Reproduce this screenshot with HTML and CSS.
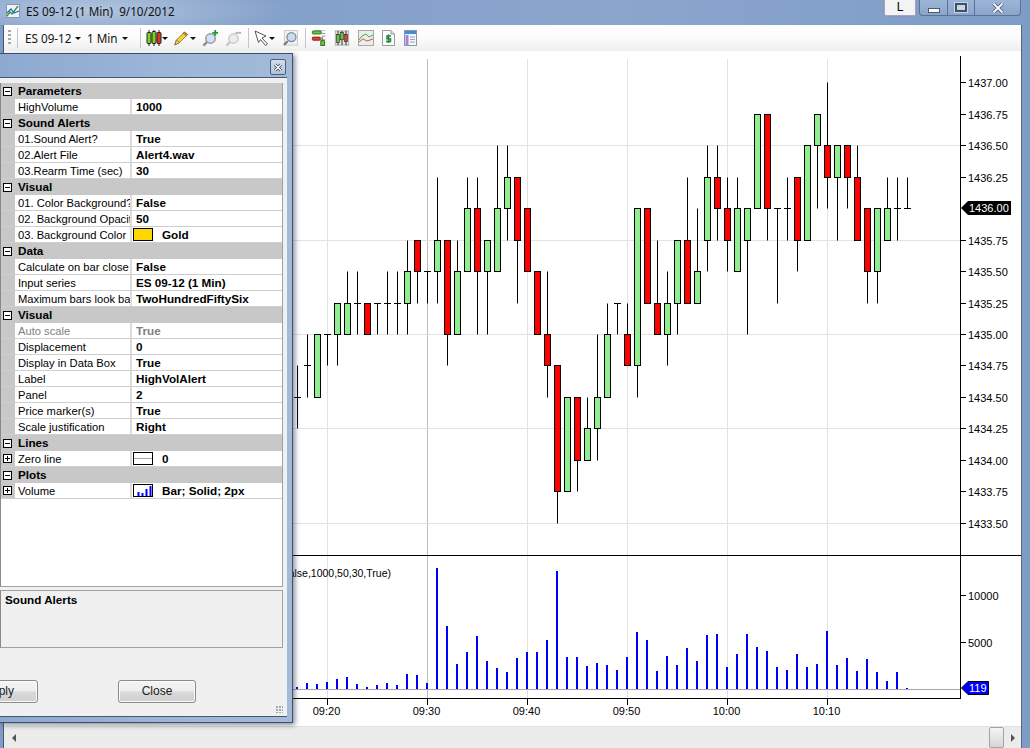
FILE: index.html
```html
<!DOCTYPE html>
<html lang="en">
<head>
  <meta charset="UTF-8" />
  <title>ES 09-12 (1 Min) 9/10/2012</title>
  <link rel="stylesheet" href="styles.css">
</head>

<body>
  <div class="titlebar">
    <svg class="title-icon" width="14" height="14" viewBox="0 0 14 14">
      <rect x="0.5" y="0.5" width="13" height="13" fill="#eef3fa" stroke="#8a97a8" />
      <path d="M1 12 L4 8 L6 10 L12 2" fill="none" stroke="#2f9a3c" stroke-width="1.4" />
      <path d="M1 9 L5 5 L8 9 L13 7" fill="none" stroke="#2a5fc0" stroke-width="1.2" />
    </svg>
    <span class="title-text">ES 09-12 (1 Min)&nbsp; 9/10/2012</span>
    <div class="link-btn">L</div>
    <div class="win-controls">
      <div class="win-btn min"><span></span></div>
      <div class="win-btn max"><span></span></div>
      <div class="win-btn close">
        <svg width="12" height="10" viewBox="0 0 12 10"><path d="M1.5 0.5 L10.5 9.5 M10.5 0.5 L1.5 9.5" stroke="#4a5a70" stroke-width="3.4" /><path d="M1.5 0.5 L10.5 9.5 M10.5 0.5 L1.5 9.5" stroke="#fff" stroke-width="1.8" /></svg>
      </div>
    </div>
  </div>

  <div class="content">
    <div class="toolbar">
      <div class="gripper"></div>
      <div class="sep first"></div>
      <span class="tb-text es">ES 09-12</span><span class="arrow"></span>
      <span class="tb-text mins">1 Min</span><span class="arrow"></span>
      <div class="sep"></div>

      <svg class="tb-icon" width="16" height="16" viewBox="0 0 16 16">
        <path d="M3 0 V16 M8 0 V16 M13 0 V16" stroke="#222" />
        <rect x="1" y="2.5" width="4" height="11" rx="1" fill="#7ed321" stroke="#222" />
        <rect x="6" y="1.5" width="4" height="12" rx="1" fill="#7ed321" stroke="#222" />
        <rect x="11" y="2.5" width="4" height="11" rx="1" fill="#e8302a" stroke="#222" />
      </svg><span class="arrow tight"></span>

      <svg class="tb-icon pencil" width="16" height="15" viewBox="0 0 20 18">
        <path d="M1 17 L3 11 L13 1 L17 4 L7 14 Z" fill="#f5d33a" stroke="#7a6a20" />
        <path d="M1 17 L3 11 L7 14 Z" fill="#f3d9a8" stroke="#7a6a20" />
        <path d="M13 1 L17 4 L15.5 5.5 L11.5 2.5 Z" fill="#e58a7a" stroke="#7a6a20" />
      </svg><span class="arrow tight"></span>

      <svg class="tb-icon zoom-in" width="17" height="17" viewBox="0 0 18 18">
        <path d="M1.5 16.5 L6 12" stroke="#8a8a8a" stroke-width="2.4" />
        <circle cx="9" cy="9" r="5" fill="#cfe2fb" stroke="#9a9a9a" stroke-width="1.6" />
        <path d="M11 3 H17 M14 0 V6" stroke="#1f9a2e" stroke-width="2" />
      </svg>
      <svg class="tb-icon zoom-out" width="17" height="17" viewBox="0 0 18 18">
        <path d="M1.5 16.5 L6 12" stroke="#c4c4c4" stroke-width="2.4" />
        <circle cx="9" cy="9" r="5" fill="#ececec" stroke="#cdcdcd" stroke-width="1.6" />
        <path d="M11 3 H17" stroke="#b8b8b8" stroke-width="2" />
      </svg>
      <div class="sep after-zoom"></div>

      <svg class="tb-icon cursor" width="15" height="16" viewBox="0 0 15 16">
        <path d="M1 1 L12 6 L8 8 L13.5 14 L11.5 15.5 L6.5 9.5 L4.5 12.5 Z" fill="#fff" stroke="#555" />
      </svg><span class="arrow tight"></span>

      <svg class="tb-icon find" width="15" height="16" viewBox="0 0 16 17">
        <rect x="1.5" y="0.5" width="14" height="15.5" fill="#f2f2f2" stroke="#c8c8c8" />
        <path d="M1 16 L5 12" stroke="#777" stroke-width="2.2" />
        <circle cx="9" cy="7.5" r="4.8" fill="#c5dcf8" stroke="#8a8a8a" stroke-width="1.4" />
      </svg>
      <div class="sep wide"></div>

      <svg class="tb-icon panel" width="16" height="16" viewBox="0 0 16 18">
        <path d="M4 0 H15 M11 4 H15 M11 7 H15 M12 11 H15 M12 14 H15 M12 17 H15" stroke="#888" />
        <path d="M11.5 8 V18" stroke="#222" />
        <rect x="0.5" y="1" width="10" height="3.5" rx="1" fill="#63c832" stroke="#2b6b1a" />
        <rect x="0.5" y="8" width="9" height="3.5" rx="1" fill="#e23c33" stroke="#7d1f1a" />
        <rect x="10" y="12" width="4" height="5.5" fill="#63c832" stroke="#2b6b1a" />
      </svg>
      <svg class="tb-icon candles" width="16" height="16" viewBox="0 0 16 18">
        <rect x="0.5" y="1" width="15" height="16" fill="#e4e4e4" stroke="#a8a8a8" />
        <path d="M3.5 1 V17 M8 1 V17 M12.5 1 V17" stroke="#222" />
        <rect x="2" y="5" width="3" height="9" fill="#63c832" stroke="#222" stroke-width="0.7" />
        <rect x="6.5" y="3" width="3" height="8" fill="#63c832" stroke="#222" stroke-width="0.7" />
        <rect x="11" y="5" width="3" height="8" fill="#e23c33" stroke="#222" stroke-width="0.7" />
      </svg>
      <svg class="tb-icon lines" width="16" height="16" viewBox="0 0 16 16">
        <rect x="0.5" y="0.5" width="15" height="15" fill="#ececec" stroke="#a8a8a8" />
        <path d="M1 10 L4 6 L8 4 L11 7 L15 5" fill="none" stroke="#3fb54a" />
        <path d="M1 12 L5 9 L9 11 L15 9" fill="none" stroke="#d8564e" />
      </svg>
      <svg class="tb-icon dollar" width="13" height="16" viewBox="0 0 13 16">
        <path d="M0.5 0.5 H9 L12.5 4 V15.5 H0.5 Z" fill="#fdfdfd" stroke="#9a9a9a" />
        <path d="M9 0.5 V4 H12.5" fill="#dcdcdc" stroke="#9a9a9a" />
        <path d="M9 6 H5 V8.7 H8.5 V11.5 H4 M6.5 4.5 V13" fill="none" stroke="#1e8a3a" stroke-width="1.5" />
      </svg>
      <svg class="tb-icon sheet" width="13" height="16" viewBox="0 0 13 16">
        <rect x="0.5" y="0.5" width="12" height="15" fill="#f4f6fa" stroke="#8c98a8" />
        <rect x="1" y="1" width="11" height="3" fill="#3f8fd8" />
        <rect x="1.5" y="5" width="3" height="10" fill="#a77fe0" />
        <path d="M6 7 H11 M6 9.5 H11 M6 12 H11" stroke="#9aa6b5" />
      </svg>
    </div>

    <svg id="chart" class="chart" width="1017" height="675" viewBox="4 51 1017 675"></svg>

    <div class="hscroll">
      <span class="scroll-left"></span>
      <div class="thumb"></div>
      <span class="scroll-right"></span>
    </div>
  </div>

  <div class="dialog">
    <div class="dialog-title">
      <div class="dialog-close">
        <svg width="10" height="9" viewBox="0 0 10 9"><path d="M2 1.5 L8 7.5 M8 1.5 L2 7.5" stroke="#3b4658" stroke-width="3" /><path d="M2 1.5 L8 7.5 M8 1.5 L2 7.5" stroke="#fff" stroke-width="1.4" /></svg>
      </div>
    </div>
    <div class="dialog-client">
      <div class="grid">
        <div class="cat"><span class="box"></span>Parameters</div>
        <div class="row"><div class="name">HighVolume</div><div class="val">1000</div></div>
        <div class="cat"><span class="box"></span>Sound Alerts</div>
        <div class="row"><div class="name">01.Sound Alert?</div><div class="val">True</div></div>
        <div class="row"><div class="name">02.Alert File</div><div class="val">Alert4.wav</div></div>
        <div class="row"><div class="name">03.Rearm Time (sec)</div><div class="val">30</div></div>
        <div class="cat"><span class="box"></span>Visual</div>
        <div class="row"><div class="name">01. Color Background?</div><div class="val">False</div></div>
        <div class="row"><div class="name">02. Background Opacity</div><div class="val">50</div></div>
        <div class="row"><div class="name">03. Background Color</div><div class="val swatched"><span class="swatch gold"></span>Gold</div></div>
        <div class="cat"><span class="box"></span>Data</div>
        <div class="row"><div class="name">Calculate on bar close</div><div class="val">False</div></div>
        <div class="row"><div class="name">Input series</div><div class="val">ES 09-12 (1 Min)</div></div>
        <div class="row"><div class="name">Maximum bars look back</div><div class="val">TwoHundredFiftySix</div></div>
        <div class="cat"><span class="box"></span>Visual</div>
        <div class="row disabled"><div class="name">Auto scale</div><div class="val">True</div></div>
        <div class="row"><div class="name">Displacement</div><div class="val">0</div></div>
        <div class="row"><div class="name">Display in Data Box</div><div class="val">True</div></div>
        <div class="row"><div class="name">Label</div><div class="val">HighVolAlert</div></div>
        <div class="row"><div class="name">Panel</div><div class="val">2</div></div>
        <div class="row"><div class="name">Price marker(s)</div><div class="val">True</div></div>
        <div class="row"><div class="name">Scale justification</div><div class="val">Right</div></div>
        <div class="cat"><span class="box"></span>Lines</div>
        <div class="row"><div class="name expandable"><span class="box plus"></span>Zero line</div><div class="val swatched"><span class="swatch zero"></span>0</div></div>
        <div class="cat"><span class="box"></span>Plots</div>
        <div class="row"><div class="name expandable"><span class="box plus"></span>Volume</div><div class="val swatched">
          <span class="swatch plot">
            <svg width="18" height="10" viewBox="0 0 18 10"><path d="M4.5 6 V10 M8.5 7 V10 M12.5 3 V10 M16.5 0 V10" stroke="#0000ff" stroke-width="2" /></svg>
          </span>Bar; Solid; 2px</div></div>
      </div>
      <div class="help">Sound Alerts</div>
      <div class="buttons">
        <button class="btn apply">Apply</button>
        <button class="btn">Close</button>
      </div>
      <div class="grip"></div>
    </div>
  </div>

  <script src="chart.js"></script>
</body>
</html>
```

FILE: styles.css
```css
* {
  box-sizing: border-box;
}

html, body {
  height: 100%;
}

body {
  margin: 0;
  position: relative;
  overflow: hidden;
  font-family: "Liberation Sans", Arial, sans-serif;
  font-size: 12px;
  color: #000;
  background: linear-gradient(90deg, #7f9cc6 0, #8aa6cd 60%, #7f9cc6 100%);
}

/* Window title */
.titlebar {
  height: 25px;
  display: flex;
  align-items: flex-start;
  padding-left: 6px;
  background: radial-gradient(ellipse 200px 30px at 90px 10px, #b3c6e0 0, rgba(179, 198, 224, 0) 100%);
}

.title-icon {
  margin-top: 4px;
}

.title-text {
  margin-left: 6px;
  margin-top: 3px;
  font-family: "Noto Sans", sans-serif;
  font-size: 11.7px;
  line-height: 17px;
  color: #111;
}

.link-btn {
  margin-left: auto;
  width: 32px;
  height: 16px;
  text-align: center;
  line-height: 14px;
  background: #f3f3f3;
  border: 1px solid #9aa8c0;
  border-top: none;
  border-radius: 0 0 2px 2px;
  box-shadow: 0 0 1px #b040c8;
}

.win-controls {
  display: flex;
  height: 16px;
  width: 102px;
  margin-left: 3px;
  margin-right: 9px;
  border: 1px solid #5c7194;
  border-top: none;
  border-radius: 0 0 4px 4px;
  background: linear-gradient(#9db5d6, #8aa5cc);
}

.win-btn {
  height: 100%;
  display: flex;
  align-items: center;
  justify-content: center;
  border-right: 1px solid #5c7194;
}

.win-btn.min { width: 28px; }
.win-btn.max { width: 27px; }
.win-btn.close { flex: 1; border-right: none; }

.win-btn.min span {
  display: block;
  width: 12px;
  height: 5px;
  margin-top: 5px;
  background: #fff;
  border: 1px solid #4a5a70;
}

.win-btn.max span {
  display: block;
  width: 12px;
  height: 9px;
  background: #c9d6e8;
  border: 2px solid #3f4f66;
  outline: 1px solid #c8d4e6;
}

/* Chart window */
.content {
  margin: 0 9px 0 4px;
  height: 723px;
  display: flex;
  flex-direction: column;
  background: #fff;
  box-shadow: -1px 0 0 #46586f, 1px 0 0 #56697f;
}

.toolbar {
  height: 26px;
  flex: none;
  display: flex;
  align-items: center;
  padding-left: 4px;
  border-radius: 3px 3px 0 0;
  background: linear-gradient(#ffffff, #fbfbfb 50%, #efefef);
  font-family: "Noto Sans", sans-serif;
}

.gripper {
  width: 3px;
  height: 16px;
  background: repeating-linear-gradient(#a9a9a9 0 2px, transparent 2px 4px);
}

.sep {
  width: 1px;
  height: 20px;
  background: #c6c6c6;
  margin: 0 5px;
}

.sep.first {
  margin: 0 7px 0 6px;
}

.sep.after-zoom {
  margin-left: 6px;
}

.sep.wide {
  margin: 0 5px 0 7px;
}

.tb-text {
  font-size: 11.7px;
  color: #111;
  white-space: nowrap;
}

.tb-text.es {
  width: 45px;
}

.tb-text.mins {
  width: 30px;
}

.arrow {
  width: 0;
  height: 0;
  margin: 1px 7px 0 5px;
  border-left: 3.5px solid transparent;
  border-right: 3.5px solid transparent;
  border-top: 3.5px solid #111;
}

.tb-text.es + .arrow {
  margin-right: 6px;
}

.tb-text.mins + .arrow {
  margin-left: 5px;
}

.arrow.tight {
  margin: 1px 0 0 0;
}

.tb-icon {
  flex: none;
}

.tb-icon.pencil,
.tb-icon.zoom-in,
.tb-icon.zoom-out {
  margin-left: 6px;
}

.tb-icon.find {
  margin-left: 8px;
}

.tb-icon.candles {
  margin-left: 7px;
}

.tb-icon.lines,
.tb-icon.dollar {
  margin-left: 8px;
}

.tb-icon.sheet {
  margin-left: 9px;
}

.chart {
  flex: none;
  display: block;
  font-family: "Liberation Sans", Arial, sans-serif;
  font-size: 11px;
}

.hscroll {
  flex: none;
  height: 22px;
  display: flex;
  align-items: center;
  background: #ececec;
  border-top: 1px solid #e2e2e2;
}

.scroll-left {
  margin-left: 8px;
  border-top: 4px solid transparent;
  border-bottom: 4px solid transparent;
  border-right: 4px solid #555;
}

.thumb {
  margin-left: auto;
  width: 15px;
  height: 21px;
  background: linear-gradient(#f4f4f4, #d6d6d6);
  border: 1px solid #a4a4a4;
  border-radius: 2px;
}

.scroll-right {
  margin: 0 6px 0 7px;
  border-top: 4px solid transparent;
  border-bottom: 4px solid transparent;
  border-left: 4px solid #555;
}

/* Floating properties dialog */
.dialog {
  position: absolute;
  left: 0;
  top: 53px;
  width: 293px;
  height: 670px;
  display: flex;
  flex-direction: column;
  padding: 0 5px 5px 0;
  border: 1px solid #3e5068;
  border-left: none;
  background: linear-gradient(90deg, #8ea9d0, #9db6d8 60%, #a3bad9);
  box-shadow: 2px 2px 5px rgba(40, 50, 70, 0.55);
}

.dialog-title {
  height: 23px;
  flex: none;
  display: flex;
  justify-content: flex-end;
  align-items: flex-start;
  padding-top: 5px;
}

.dialog-close {
  width: 16px;
  height: 16px;
  margin-right: 1px;
  display: flex;
  align-items: center;
  justify-content: center;
  background: linear-gradient(#d5deeb, #b2c2da);
  border: 1px solid #4d6080;
  border-radius: 2px;
}

.dialog-client {
  flex: 1;
  position: relative;
  padding: 5px 4px 0 0;
  background: #f0f0f0;
  border-top: 1px solid #46586f;
  border-bottom: 1px solid #46586f;
}

.grid {
  height: 504px;
  background: #fff;
  border: 1px solid #a0a0a0;
  border-top: none;
  border-left: 1px solid #8a8a8a;
  overflow: hidden;
}

.cat {
  height: 16px;
  display: flex;
  align-items: center;
  padding-left: 2px;
  background: #c8c8c8;
  font-size: 11.7px;
  font-weight: bold;
  line-height: 16px;
}

.box {
  position: relative;
  width: 9px;
  height: 9px;
  margin-right: 6px;
  flex: none;
  background: #fff;
  border: 1px solid #000;
}

.box::before {
  content: "";
  position: absolute;
  left: 1px;
  top: 3px;
  width: 5px;
  height: 1px;
  background: #000;
}

.box.plus::after {
  content: "";
  position: absolute;
  left: 3px;
  top: 1px;
  width: 1px;
  height: 5px;
  background: #000;
}

.row {
  height: 16px;
  display: flex;
  line-height: 17px;
  border-bottom: 1px solid #cfcfcf;
  background: linear-gradient(90deg, #c8c8c8 14px, #fff 14px);
}

.name {
  width: 117px;
  margin-left: 14px;
  padding-left: 3px;
  font-size: 11.2px;
  white-space: nowrap;
  overflow: hidden;
  border-right: 2px solid #dcdcdc;
  flex: none;
}

.name.expandable {
  margin-left: 0;
  width: 131px;
  padding-left: 2px;
  display: flex;
  align-items: flex-start;
}

.name.expandable .box {
  margin-top: 3px;
}

.val {
  padding-left: 4px;
  font-size: 11.7px;
  font-weight: bold;
  line-height: 15px;
  white-space: nowrap;
}

.val.swatched {
  display: flex;
  align-items: flex-start;
  padding-left: 1px;
}

.swatch {
  width: 20px;
  height: 13px;
  margin: 1px 9px 0 0;
  border: 1px solid #000;
  flex: none;
}

.swatch.gold {
  background: #ffd700;
}

.swatch.zero {
  background: linear-gradient(#fff 5px, #a8a8a8 5px, #a8a8a8 6px, #fff 6px);
}

.swatch.plot svg {
  display: block;
  margin-top: 1px;
}

.row.disabled .name,
.row.disabled .val {
  color: #808080;
}

.help {
  height: 58px;
  margin-top: 3px;
  padding: 2px 4px;
  font-size: 11.7px;
  font-weight: bold;
  background: #f0f0f0;
  border: 1px solid #a0a0a0;
  border-left-color: #8a8a8a;
}

.buttons {
  display: flex;
  gap: 80px;
  margin-top: 32px;
  margin-left: -40px;
}

.btn {
  width: 78px;
  height: 23px;
  padding: 0 0 2px;
  font-family: "Liberation Sans", Arial, sans-serif;
  font-size: 12px;
  color: #222;
  background: linear-gradient(#f4f4f4 0, #ededed 48%, #dadada 52%, #cfcfcf 100%);
  border: 1px solid #8a8a8a;
  border-radius: 3px;
  box-shadow: inset 0 0 0 1px #fbfbfb;
}

.grip {
  position: absolute;
  right: 4px;
  bottom: 3px;
  width: 7px;
  height: 7px;
  background: radial-gradient(circle at 1px 1px, #a8a8a8 1px, transparent 1px) 0 0 / 3px 3px;
}
```

FILE: chart.js
```js
// top, bottom, high, low in quarter-point steps down from 1437.00. one bar per minute, x starts at 297
const bars = [
  ['d',10,10,9,11], ['d',9,9,8,10], ['g',8,10,8,10], ['d',8,8,8,9], ['g',7,8,7,9], ['g',7,8,6,8],
  ['d',7,7,6,8], ['r',7,8,7,8], ['d',7,7,7,8], ['d',7,7,6,8], ['d',7,7,6,8], ['g',6,7,5,8],
  ['r',5,6,5,7], ['d',6,6,6,7], ['g',5,6,3,7], ['r',5,8,5,9], ['g',6,8,5,8], ['g',4,6,3,6],
  ['r',4,6,3,8], ['g',5,6,5,8], ['g',4,6,2,6], ['g',3,4,2,5], ['r',3,5,3,7], ['r',4,6,4,6],
  ['r',6,8,6,8], ['r',8,9,6,10], ['r',9,13,9,14], ['g',10,13,10,13], ['r',10,12,10,13], ['g',11,12,10,12],
  ['g',10,11,8,12], ['g',8,10,7,10], ['d',7,7,7,8], ['r',8,9,7,9], ['g',4,9,4,10], ['r',4,7,4,7],
  ['r',7,8,5,8], ['g',7,8,6,9], ['g',5,7,5,8], ['r',5,7,3,7], ['g',6,7,4,7], ['g',3,5,2,6],
  ['r',3,4,2,5], ['r',4,5,3,6], ['g',4,6,3,6], ['g',4,5,4,8], ['g',1,4,1,4], ['r',1,4,1,5],
  ['d',4,4,4,7], ['d',4,4,3,5], ['r',3,5,3,6], ['g',2,5,2,5], ['g',1,2,1,4], ['r',2,3,0,4],
  ['g',2,3,2,5], ['r',2,3,2,4], ['r',3,5,2,5], ['r',4,6,4,7], ['g',4,6,4,7], ['g',4,5,3,5],
  ['d',4,4,3,5], ['d',4,4,3,4]
];

const volumes = [
  2,6,5,7,10,12,5,2,4,6,4,15,14,6,121,63,25,37,53,28,21,17,31,37,37,49,118,32,32,23,26,24,19,32,57,
  49,18,33,24,41,28,54,55,22,35,55,42,38,22,19,35,22,25,58,24,31,18,30,17,8,17,1
];

const colors = { g: '#90ee90', r: '#ff0000' };
const times = ['09:20', '09:30', '09:40', '09:50', '10:00', '10:10'];

function priceY(step) {
  return Math.round(82.4 + 31.45 * step) + 0.5;
}

function line(x1, y1, x2, y2, color) {
  return `<line x1="${x1}" y1="${y1}" x2="${x2}" y2="${y2}" stroke="${color}" />`;
}

function text(x, y, str, fill, anchor) {
  return `<text x="${x}" y="${y}" fill="${fill || '#000'}" text-anchor="${anchor || 'start'}">${str}</text>`;
}

function drawChart() {
  let out = '';

  // grid
  times.forEach((t, i) => {
    const x = 327.5 + i * 100;
    out += line(x, 59, x, 698, i === 1 ? '#bdbdbd' : '#e2e2e2');
  });
  [2, 5, 8, 11, 14].forEach(step => {
    out += line(4, priceY(step), 960, priceY(step), '#e2e2e2');
  });

  // candles
  bars.forEach((bar, i) => {
    const x = 297 + i * 10;
    const [type, top, bottom, high, low] = bar;
    out += line(x + 0.5, priceY(high), x + 0.5, priceY(low), '#000');
    if (type === 'd') {
      out += line(x - 3, priceY(top), x + 4, priceY(top), '#000');
    } else {
      out += `<rect x="${x - 2.5}" y="${priceY(top)}" width="6" height="${priceY(bottom) - priceY(top)}" fill="${colors[type]}" stroke="#000" />`;
    }
  });

  // price axis
  out += line(960.5, 56, 960.5, 699, '#000');
  for (let step = 0; step < 15; step++) {
    if (step === 4) continue;
    const y = priceY(step);
    out += line(961, y, 966, y, '#000');
    out += text(968, y + 4, (1437 - step * 0.25).toFixed(2));
  }
  out += '<polygon points="961,208 968,201 1011,201 1011,215 968,215" fill="#000" />';
  out += text(969, 212, '1436.00', '#fff');

  // volume panel
  out += line(4, 555.5, 1021, 555.5, '#000');
  out += '<text x="391" y="577" font-size="10.5" text-anchor="end">HighVolAlert(False,1000,50,30,True)</text>';
  out += line(4, 689.5, 960, 689.5, '#a8a8a8');
  volumes.forEach((h, i) => {
    out += `<rect x="${296 + i * 10}" y="${689 - h}" width="2" height="${h}" fill="#0000ff" />`;
  });
  out += line(961, 595.5, 966, 595.5, '#000') + text(968, 600, '10000');
  out += line(961, 642.5, 966, 642.5, '#000') + text(968, 647, '5000');
  out += '<polygon points="961.5,688 968,681.5 988.5,681.5 988.5,694.5 968,694.5" fill="#0000ff" stroke="#000" />';
  out += text(969, 692, '119', '#fff');

  // time axis
  out += line(4, 698.5, 961, 698.5, '#000');
  times.forEach((t, i) => {
    const x = 327.5 + i * 100;
    out += line(x, 699, x, 705, '#000');
    out += text(x - 1, 715, t, '#000', 'middle');
  });

  document.getElementById('chart').innerHTML = out;
}

drawChart();
```
